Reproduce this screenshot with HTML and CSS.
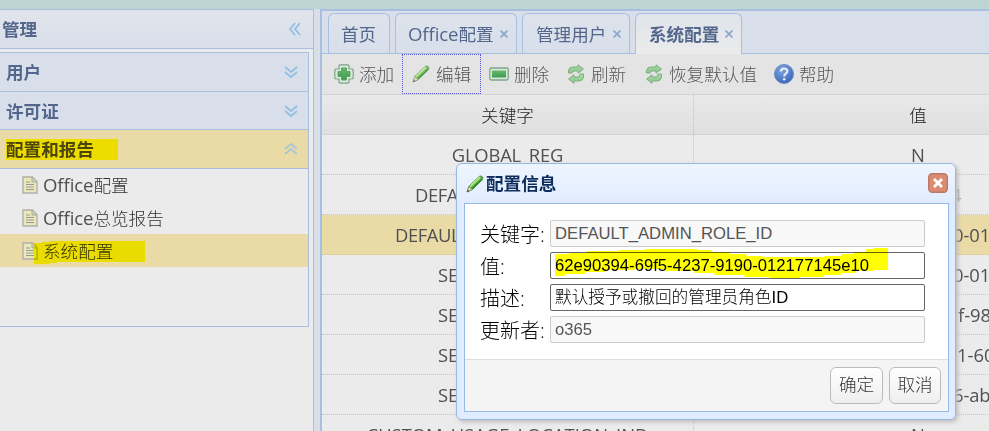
FILE: index.html
```html
<!DOCTYPE html>
<html lang="zh-CN">
<head>
<meta charset="utf-8">
<title>系统配置</title>
<link rel="stylesheet" href="styles.css">
</head>
<body>
<svg class="defs" width="0" height="0">
  <defs>
    <linearGradient id="leaf" x1="0" y1="0" x2="0" y2="1"><stop offset="0" stop-color="#a8daa5"/><stop offset="1" stop-color="#8ac58d"/></linearGradient>
    <linearGradient id="green" x1="0" y1="0" x2="0" y2="1"><stop offset="0" stop-color="#67b96a"/><stop offset="1" stop-color="#3f9a52"/></linearGradient>
    <radialGradient id="blue" cx=".4" cy=".3" r=".75"><stop offset="0" stop-color="#7fa5e3"/><stop offset="1" stop-color="#3a62b8"/></radialGradient>
  </defs>
  <symbol id="chev" viewBox="0 0 16 16"><path d="M2 3l6 5 6-5M2 8l6 5 6-5" fill="none" stroke="#92bfe2" stroke-width="1.8"/></symbol>
  <symbol id="doc" viewBox="0 0 16 18"><path d="M1 1h9.500l4.500 4.500V17H1z" fill="#e9e8b8" stroke="#b0b0ac" stroke-width="1.400"/><path d="M10 1v5h5" fill="#d0d0b4" stroke="#aaa99b"/><path d="M4 6h4M4 8.500h8M4 11h8M4 13.500h8" stroke="#999b9b" stroke-width="1.200"/></symbol>
  <symbol id="pencil" viewBox="0 0 18 18"><path d="M1 17l2-6L13.500 1.300q1.500-.8 2.700.4t.3 2.600L6 14.800z" fill="#55b23c" stroke="#5d8a4e"/><path d="M4 11.500L14 2.300" stroke="#b5e58c" stroke-width="2"/><path d="M5.800 14L16 4.500" stroke="#2f8a2a" stroke-width="1.400"/><path d="M1 17l2-5.500 3 3z" fill="#dfd8b6" stroke="#8c9c7c" stroke-width=".7"/><path d="M1 17l.8-2.300 1.500 1.500z" fill="#444"/></symbol>
  <symbol id="refresh" viewBox="0 0 18 20"><path d="M1.500 9V6.500Q2 3 6 3h5V.8L16.500 5 11 9.200V7H7Q5.500 7 5 9z" fill="url(#leaf)" stroke="#80ae80" stroke-width="1"/><path d="M16.500 10v3q-.5 4-4.500 4H7v2.300L1.500 15 7 10.800V13h4q1.500 0 2-3z" fill="url(#leaf)" stroke="#80ae80" stroke-width="1"/></symbol>
</svg>
<div class="app">
  <div class="banner"></div>
  <div class="workspace">
    <aside class="side">
      <header class="side-head"><span>管理</span><svg class="chev left"><use href="#chev"/></svg></header>
      <div class="accordion">
        <div class="acc"><span>用户</span><svg class="chev"><use href="#chev"/></svg></div>
        <div class="acc second"><span>许可证</span><svg class="chev"><use href="#chev"/></svg></div>
        <div class="acc open"><span class="marked">配置和报告</span><svg class="chev up"><use href="#chev"/></svg></div>
        <ul class="tree">
          <li><svg class="doc"><use href="#doc"/></svg><span><span class="office">Office</span>配置</span></li>
          <li><svg class="doc"><use href="#doc"/></svg><span><span class="office">Office</span>总览报告</span></li>
          <li class="on"><svg class="doc"><use href="#doc"/></svg><span>系统配置</span>
            <svg class="tree-mark" viewBox="0 0 111 24"><path d="M0 2H8V1H15V0H111V21H23V22H16V23H0z"/></svg></li>
        </ul>
      </div>
    </aside>
    <div class="splitter"></div>
    <main class="main">
      <nav class="tabs">
        <div class="tab t1">首页</div>
        <div class="tab t2"><span><span class="office">Office</span>配置</span><svg class="x" viewBox="0 0 8 8"><path d="M.5.5l7 7M7.500.5l-7 7"/></svg></div>
        <div class="tab t3"><span>管理用户</span><svg class="x" viewBox="0 0 8 8"><path d="M.5.5l7 7M7.500.5l-7 7"/></svg></div>
        <div class="tab t4 active"><span>系统配置</span><svg class="x" viewBox="0 0 8 8"><path d="M.5.5l7 7M7.500.5l-7 7"/></svg></div>
      </nav>
      <div class="toolbar">
        <div class="tool add"><svg viewBox="0 0 20 20"><path d="M6 .8h8l1 1V5h3.200l1 1v8l-1 1H15v3.200l-1 1H6l-1-1V15H1.800l-1-1V6l1-1H5V1.800z" fill="#dce9dc" stroke="#7ba586" stroke-width="1.200"/><path d="M7.500 4h5v3.500H16v5h-3.500V16h-5v-3.500H4v-5h3.500z" fill="url(#green)" stroke="#5aa567"/></svg>添加</div>
        <div class="tool edit"><svg viewBox="0 0 18 18"><use href="#pencil"/></svg>编辑</div>
        <div class="tool del"><svg viewBox="0 0 20 20"><rect x=".8" y="4" width="18.400" height="12" rx="1.500" fill="#dce8dc" stroke="#7ba586" stroke-width="1.300"/><rect x="3" y="6.500" width="14" height="7" fill="url(#green)"/></svg>删除</div>
        <div class="tool ref"><svg viewBox="0 0 18 20"><use href="#refresh"/></svg>刷新</div>
        <div class="tool restore"><svg viewBox="0 0 18 20"><use href="#refresh"/></svg>恢复默认值</div>
        <div class="tool help"><svg viewBox="0 0 20 20"><circle cx="10" cy="10" r="9.500" fill="url(#blue)" stroke="#6f8dc4"/><path d="M6.800 7.500q.3-3 3.400-3t3.200 2.700q0 1.400-1.600 2.500T10.200 12.500" fill="none" stroke="#e4ebf6" stroke-width="2.200"/><circle cx="10.200" cy="15.200" r="1.300" fill="#e4ebf6"/></svg>帮助</div>
      </div>
      <div class="grid">
        <div class="row head"><div class="key">关键字</div><div class="val">值</div></div>
        <div class="row"><div class="key k1">GLOBAL_REG</div><div class="val">N</div></div>
        <div class="row"><div class="key part k2">DEFA</div><div class="val part v2">4</div></div>
        <div class="row sel"><div class="key part k3">DEFAUL</div><div class="val part v3">0-01</div></div>
        <div class="row"><div class="key part k4">SE</div><div class="val part v3">0-01</div></div>
        <div class="row"><div class="key part k4">SE</div><div class="val part v4">f-98</div></div>
        <div class="row"><div class="key part k4">SE</div><div class="val part v5">1-60</div></div>
        <div class="row"><div class="key part k4">SE</div><div class="val part v3">6-ab</div></div>
        <div class="row"><div class="key k5">CUSTOM_USAGE_LOCATION_IND</div><div class="val">N</div></div>
      </div>
    </main>
  </div>
  <section class="dialog">
    <header class="dialog-head"><svg class="dialog-pencil" viewBox="0 0 18 18"><use href="#pencil"/></svg><span>配置信息</span>
      <svg class="close" viewBox="0 0 20 20"><rect x=".7" y=".7" width="18.600" height="18.600" rx="3.500" fill="#dc8b70" stroke="#b97966" stroke-width="1.400"/><path d="M6 6l8 8M14 6l-8 8" stroke="#fff" stroke-width="2.800"/></svg></header>
    <div class="dialog-body">
      <div class="form">
        <label>关键字:</label><div class="input off">DEFAULT_ADMIN_ROLE_ID</div>
        <label>值:</label><div class="input id-input"><svg class="value-mark" viewBox="0 0 334 31"><path d="M0 6H14V5H32V3H64V2H90V1H143V2H157V4H175V6H192V8H208V9H270V8H287V6H300V4H312V1H319V0H334V22H319V23H302V25H287V27H270V29H246V30H215V29H190V27H160V25H140V23H110V21H80V22H50V24H30V26H10V28H0z" fill="#ff0"/></svg><span>62e90394-69f5-4237-9190-012177145e10</span></div>
        <label>描述:</label><div class="input desc">默认授予或撤回的管理员角色ID</div>
        <label>更新者:</label><div class="input off">o365</div>
      </div>
      <footer><button class="ok">确定</button><button class="cancel">取消</button></footer>
    </div>
  </section>
</div>
</body>
</html>
```
FILE: styles.css
```css
* { box-sizing: border-box; }
body { margin: 0; overflow: hidden; font: 17.6px/24px "Open Sans", "Noto Sans CJK SC", sans-serif; color: #4a4a4a; }
.defs { position: absolute; }
.app { position: relative; width: 989px; height: 431px; overflow: hidden; background: #ebebeb; display: flex; flex-direction: column; }
.banner { height: 9px; flex: none; background: #bdd6d3; }
.workspace { display: flex; height: 422px; }
.office { font-size: 18.6px; font-weight: 400; line-height: 20px; letter-spacing: -.1px; color: #505050; }

.side { width: 314px; flex: none; border-top: 1px solid #a9bfdf; border-right: 1px solid #a9bfdf; }
.side-head { height: 39px; display: flex; align-items: center; justify-content: space-between; padding: 0 10px 0 2px; border-bottom: 1px solid #a9bfdf; background: linear-gradient(#e1e5eb, #d8dfeb); color: #53678c; font-weight: bold; }
.chev { width: 16px; height: 16px; }
.left { transform: rotate(90deg); }
.up { transform: rotate(180deg); }
.accordion { width: 309px; height: 275px; margin-top: 3px; border: 1px solid #a9bfdf; border-left: 0; }
.acc { height: 39px; display: flex; align-items: center; justify-content: space-between; padding: 0 9px 0 6px; background: #d8dfeb; border-bottom: 1px solid #a9bfdf; color: #53678c; font-weight: bold; }
.second { height: 38px; }
.acc.open { background: #eadba6; color: #4c4608; }
.open .chev { opacity: .75; }
.marked { width: 112px; height: 21px; line-height: 20px; margin-top: 1px; background: #ecdc00; }
.tree { margin: 0; padding: 0; list-style: none; }
.tree li { position: relative; height: 32.67px; display: flex; align-items: center; gap: 5px; padding-left: 22px; font-weight: 300; color: #333; }
.tree .on { background: #eadba6; }
.doc { width: 16px; height: 18px; }
.tree-mark { position: absolute; left: 34px; top: 7px; width: 111px; height: 24px; mix-blend-mode: multiply; }
.tree-mark path { fill: #ffff00; }

.splitter { width: 6px; flex: none; background: #d9dfe9; }
.main { width: 669px; flex: none; border-left: 2px solid #a9bfdf; border-top: 2px solid #a9bfdf; }
.tabs { height: 43px; display: flex; align-items: flex-end; gap: 5px; padding-left: 6px; background: #d8dfeb; border-bottom: 1px solid #a9bfdf; }
.tab { height: 40px; display: flex; align-items: center; justify-content: space-between; padding: 0 8px 0 12px; border: 1px solid #a9bfdf; border-bottom: 0; border-radius: 6px 6px 0 0; background: linear-gradient(#dee3eb, #d8dfeb); color: #53678c; }
.tab .office { color: #53678c; }
.t1 { width: 62px; padding-right: 0; }
.t2 { width: 122px; }
.t3 { width: 108px; padding-left: 13px; }
.t4 { width: 107px; padding-left: 13px; }
.tab.active { height: 41px; margin-bottom: -1px; background: linear-gradient(#dfe4eb, #ebebeb); font-weight: bold; }
.x { width: 8px; height: 8px; }
.x path { fill: none; stroke: #8ea8cb; stroke-width: 1.7; }
.toolbar { height: 41px; display: flex; border-bottom: 1px solid #d2d2d2; background: #e4e4e4; font-weight: 300; color: #555; padding-left: 3px; }
.tool { height: 40px; display: flex; align-items: center; gap: 5px; padding-left: 9px; white-space: nowrap; }
.tool svg { width: 20px; height: 20px; flex: none; }
.add { width: 77px; }
.edit { width: 79px; gap: 5px; border: 1px dotted #5757dc; }
.edit svg { width: 18px; height: 18px; margin-right: 1px; opacity: .8; }
.del { width: 77px; padding-left: 8px; }
.ref { width: 78px; padding-left: 9px; gap: 6px; }
.tool.ref svg, .tool.restore svg { width: 18px; }
.restore { width: 129px; padding-left: 9px; gap: 6px; }
.grid { width: 900px; }
.row { display: flex; height: 40px; font-size: 18.4px; line-height: 39px; border-bottom: 1px dotted #c4c4c4; color: #505050; }
.row.head { border-bottom: 1px solid #d2d2d2; background: linear-gradient(#e9e9e9, #dfdfdf); font-size: 17.6px; font-weight: 300; color: #222; line-height: 41px; }
.row.sel { background: #eadba6; }
.key { width: 372px; border-right: 1px dotted #c4c4c4; text-align: center; }
.val { width: 448px; text-align: center; }
.part { text-align: left; }
.k1 { letter-spacing: -.2px; }
.k2 { padding-left: 93px; letter-spacing: -.4px; }
.k3 { padding-left: 73px; letter-spacing: -.4px; }
.k4 { padding-left: 116px; }
.k5 { letter-spacing: 0; }
.v2 { padding-left: 257px; color: #aaa; }
.v3 { padding-left: 259px; letter-spacing: -.1px; }
.v4 { padding-left: 264px; }
.v5 { padding-left: 263px; }

.dialog { position: absolute; left: 456px; top: 163px; width: 500px; height: 257px; padding: 0 7px 7px; border: 1px solid #95b8e7; border-radius: 6px; background: linear-gradient(#eff5ff, #e0ecff 40px); box-shadow: 2px 2px 4px #bbb; }
.dialog-head { height: 39px; display: flex; align-items: center; padding: 0 0 0 2px; color: #0e2d5f; font-weight: bold; line-height: 20px; }
.dialog-head span { margin-top: -2px; }
.dialog-pencil { width: 18px; height: 18px; margin-right: 2px; }
.close { width: 20px; height: 20px; margin-left: auto; margin-top: -1px; }
.dialog-body { height: 209px; border: 1px solid #95b8e7; background: #fff; width: 485px; }
.form { height: 155px; display: grid; grid-template-columns: 69px 375px; grid-auto-rows: 27px; row-gap: 5px; padding: 16px 0 0 16px; color: #000; }
label { margin-left: -1px; font: 300 20px/29px "Open Sans", "Noto Sans CJK SC", sans-serif; }
.input { position: relative; height: 27px; border: 1px solid #666; border-radius: 2px; padding-left: 4px; background: #fff; font: 16.67px/25px "Liberation Sans", "Noto Sans CJK SC", sans-serif; white-space: nowrap; }
.off { border-color: #ccc; color: #555; background: #f8f8f8; }
.desc { font-weight: 300; }
.id-input span { position: relative; }
.value-mark { position: absolute; left: 4px; top: -5px; width: 333px; height: 31px; mix-blend-mode: multiply; }
footer { height: 52px; display: flex; justify-content: flex-end; gap: 6px; padding: 7px 7px 0; border-top: 1px solid #ddd; background: #f4f4f4; }
button { width: 53px; height: 37px; padding: 0 0 3px; border: 1px solid #bbb; border-radius: 6px; background: linear-gradient(#fff, #eee); font: 300 17.6px/24px "Noto Sans CJK SC", sans-serif; color: #333; }
.cancel { width: 52px; }
```
